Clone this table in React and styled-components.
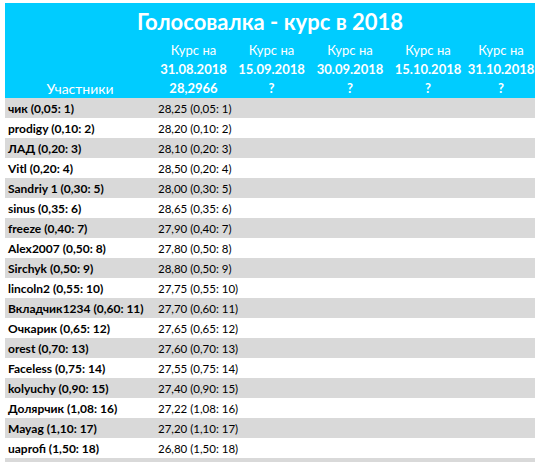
import React from 'react';
import styled, { createGlobalStyle } from 'styled-components';

const COLS = '150px 77px 79px 78px 78px 68px';

const GlobalStyle = createGlobalStyle`
  body {
    margin: 0;
    background: #ffffff;
    font-family: 'Lato', 'Open Sans', sans-serif;
  }
`;

const Sheet = styled.div`
  width: 530px;
  padding: 3px 0 0 5px;
`;

const Header = styled.div`
  background-color: #00ccff;
  color: #ffffff;
`;

const Title = styled.h1`
  margin: 0;
  height: 37px;
  line-height: 38px;
  text-align: center;
  font-size: 22px;
  font-weight: 700;
`;

const HeaderRow = styled.div`
  display: grid;
  grid-template-columns: ${COLS};
  height: ${({ h }) => h || 19}px;
  align-items: center;
  font-size: 13px;
  font-weight: ${({ bold }) => (bold ? 700 : 400)};
`;

const HeaderCell = styled.div`
  text-align: center;
  font-size: ${({ size }) => size || 13}px;
  font-weight: ${({ bold }) => (bold ? 700 : 'inherit')};
`;

const Row = styled.div`
  display: grid;
  grid-template-columns: ${COLS};
  height: 20px;
  align-items: center;
  background-color: ${({ shaded }) => (shaded ? '#d9d9d9' : '#ffffff')};
  font-size: 12px;
  color: #000000;
`;

const Name = styled.div`
  padding-left: 3px;
  font-weight: 700;
  white-space: nowrap;
`;

const Value = styled.div`
  padding-left: 3px;
  font-size: 11.5px;
  white-space: nowrap;
`;

const dates = ['31.08.2018', '15.09.2018', '30.09.2018', '15.10.2018', '31.10.2018'];

const rows = [
  ['чик', '0,05: 1', '28,25'],
  ['prodigy', '0,10: 2', '28,20'],
  ['ЛАД', '0,20: 3', '28,10'],
  ['Vitl', '0,20: 4', '28,50'],
  ['Sandriy 1', '0,30: 5', '28,00'],
  ['sinus', '0,35: 6', '28,65'],
  ['freeze', '0,40: 7', '27,90'],
  ['Alex2007', '0,50: 8', '27,80'],
  ['Sirchyk', '0,50: 9', '28,80'],
  ['lincoln2', '0,55: 10', '27,75'],
  ['Вкладчик1234', '0,60: 11', '27,70'],
  ['Очкарик', '0,65: 12', '27,65'],
  ['orest', '0,70: 13', '27,60'],
  ['Faceless', '0,75: 14', '27,55'],
  ['kolyuchy', '0,90: 15', '27,40'],
  ['Долярчик', '1,08: 16', '27,22'],
  ['Mayag', '1,10: 17', '27,20'],
  ['uaprofi', '1,50: 18', '26,80'],
];

const App = () => (
  <Sheet>
    <GlobalStyle />
    <Header>
      <Title>Голосовалка - курс в 2018</Title>
      <HeaderRow>
        <div />
        {dates.map((d) => (
          <HeaderCell key={d}>Курс на</HeaderCell>
        ))}
      </HeaderRow>
      <HeaderRow bold>
        <div />
        {dates.map((d) => (
          <HeaderCell key={d}>{d}</HeaderCell>
        ))}
      </HeaderRow>
      <HeaderRow h={20}>
        <HeaderCell size={14}>Участники</HeaderCell>
        <HeaderCell bold>28,2966</HeaderCell>
        {dates.slice(1).map((d) => (
          <HeaderCell key={d} bold>?</HeaderCell>
        ))}
      </HeaderRow>
    </Header>
    {rows.map(([name, vote, rate], i) => (
      <Row key={name} shaded={i % 2 === 0}>
        <Name>{name} ({vote})</Name>
        <Value>{rate} ({vote})</Value>
      </Row>
    ))}
    <Row shaded />
  </Sheet>
);

export default App;
